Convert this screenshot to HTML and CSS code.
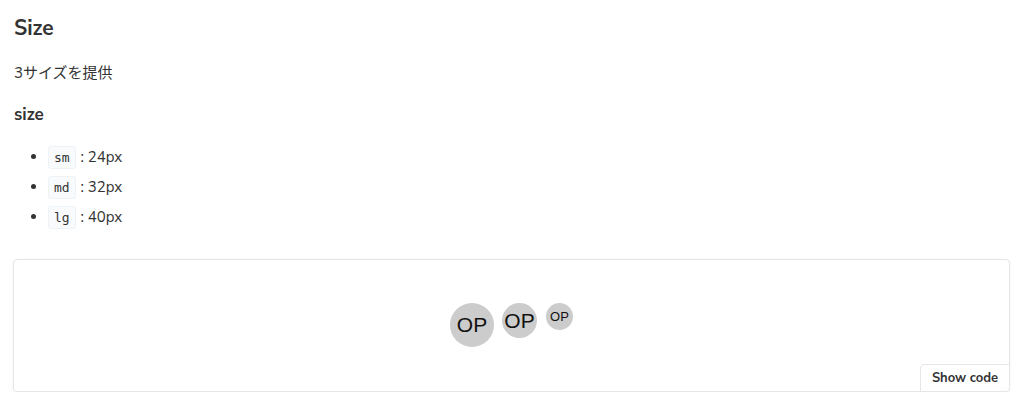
FILE: index.html
```html
<!DOCTYPE html>
<html lang="ja">
<head>
  <meta charset="UTF-8" />
  <meta name="viewport" content="width=device-width, initial-scale=1.0" />
  <title>Avatar - Size</title>
  <link rel="stylesheet" href="styles.css">
</head>
<body>
  <div class="docs">
    <h2>Size</h2>
    <p>3サイズを提供</p>
    <h3>size</h3>
    <ul>
      <li><code>sm</code> : 24px</li>
      <li><code>md</code> : 32px</li>
      <li><code>lg</code> : 40px</li>
    </ul>

    <div class="preview">
      <div class="canvas">
        <div class="avatar lg">OP</div>
        <div class="avatar md">OP</div>
        <div class="avatar sm">OP</div>
      </div>
      <button class="show-code">Show code</button>
    </div>
  </div>
</body>
</html>
```

FILE: styles.css
```css
body {
  margin: 0;
  padding: 0;
  background: #fff;
  font-family: "Nunito Sans", Lato, "Noto Sans CJK JP", sans-serif;
  color: #333;
}

.docs {
  padding: 0 14px 0 13px;
}

.docs h2 {
  margin: 0;
  padding: 15px 0 0 1px;
  font-size: 21px;
  font-weight: 700;
  line-height: 26px;
  color: #333;
}

.docs p {
  margin: 20px 0 0 1px;
  font-size: 15px;
  line-height: 24px;
  color: #333;
}

.docs h3 {
  margin: 19px 0 0 1px;
  font-size: 17px;
  font-weight: 700;
  line-height: 22px;
}

.docs ul {
  margin: 19px 0 0 0;
  padding-left: 35px;
  font-size: 15px;
}

.docs li {
  line-height: 24px;
  margin-bottom: 6px;
}

.docs code {
  font-family: "DejaVu Sans Mono", "Liberation Mono", monospace;
  font-size: 13px;
  line-height: 1;
  padding: 3px 5px;
  margin-right: 1px;
  background: #f8fafc;
  border: 1px solid #eef3f8;
  border-radius: 3px;
  color: #333;
}

/* Vorschau-Box */
.preview {
  position: relative;
  margin-top: 30px;
  border: 1px solid #e4e6e8;
  border-radius: 4px;
  box-shadow: 0 1px 3px rgba(0, 0, 0, 0.06);
  height: 131px;
}

.canvas {
  display: flex;
  justify-content: center;
  align-items: flex-start;
  padding-top: 43px;
}

.avatar {
  display: flex;
  justify-content: center;
  align-items: center;
  border-radius: 50%;
  background: #cccccc;
  color: #111;
  font-family: "Liberation Sans", Arial, sans-serif;
  font-size: 21px;
}

.avatar.lg {
  width: 44px;
  height: 44px;
  margin-right: 8px;
}

.avatar.md {
  width: 35px;
  height: 35px;
  margin-right: 9px;
}

.avatar.sm {
  width: 27px;
  height: 27px;
  font-size: 13px;
}

.show-code {
  position: absolute;
  right: -1px;
  bottom: -1px;
  padding: 0 11px;
  height: 28px;
  background: #fff;
  border: 1px solid #e4e6e8;
  border-radius: 4px 0 4px 0;
  font-family: "Nunito Sans", Lato, sans-serif;
  font-size: 13px;
  font-weight: 700;
  color: #333;
  cursor: pointer;
}
```
